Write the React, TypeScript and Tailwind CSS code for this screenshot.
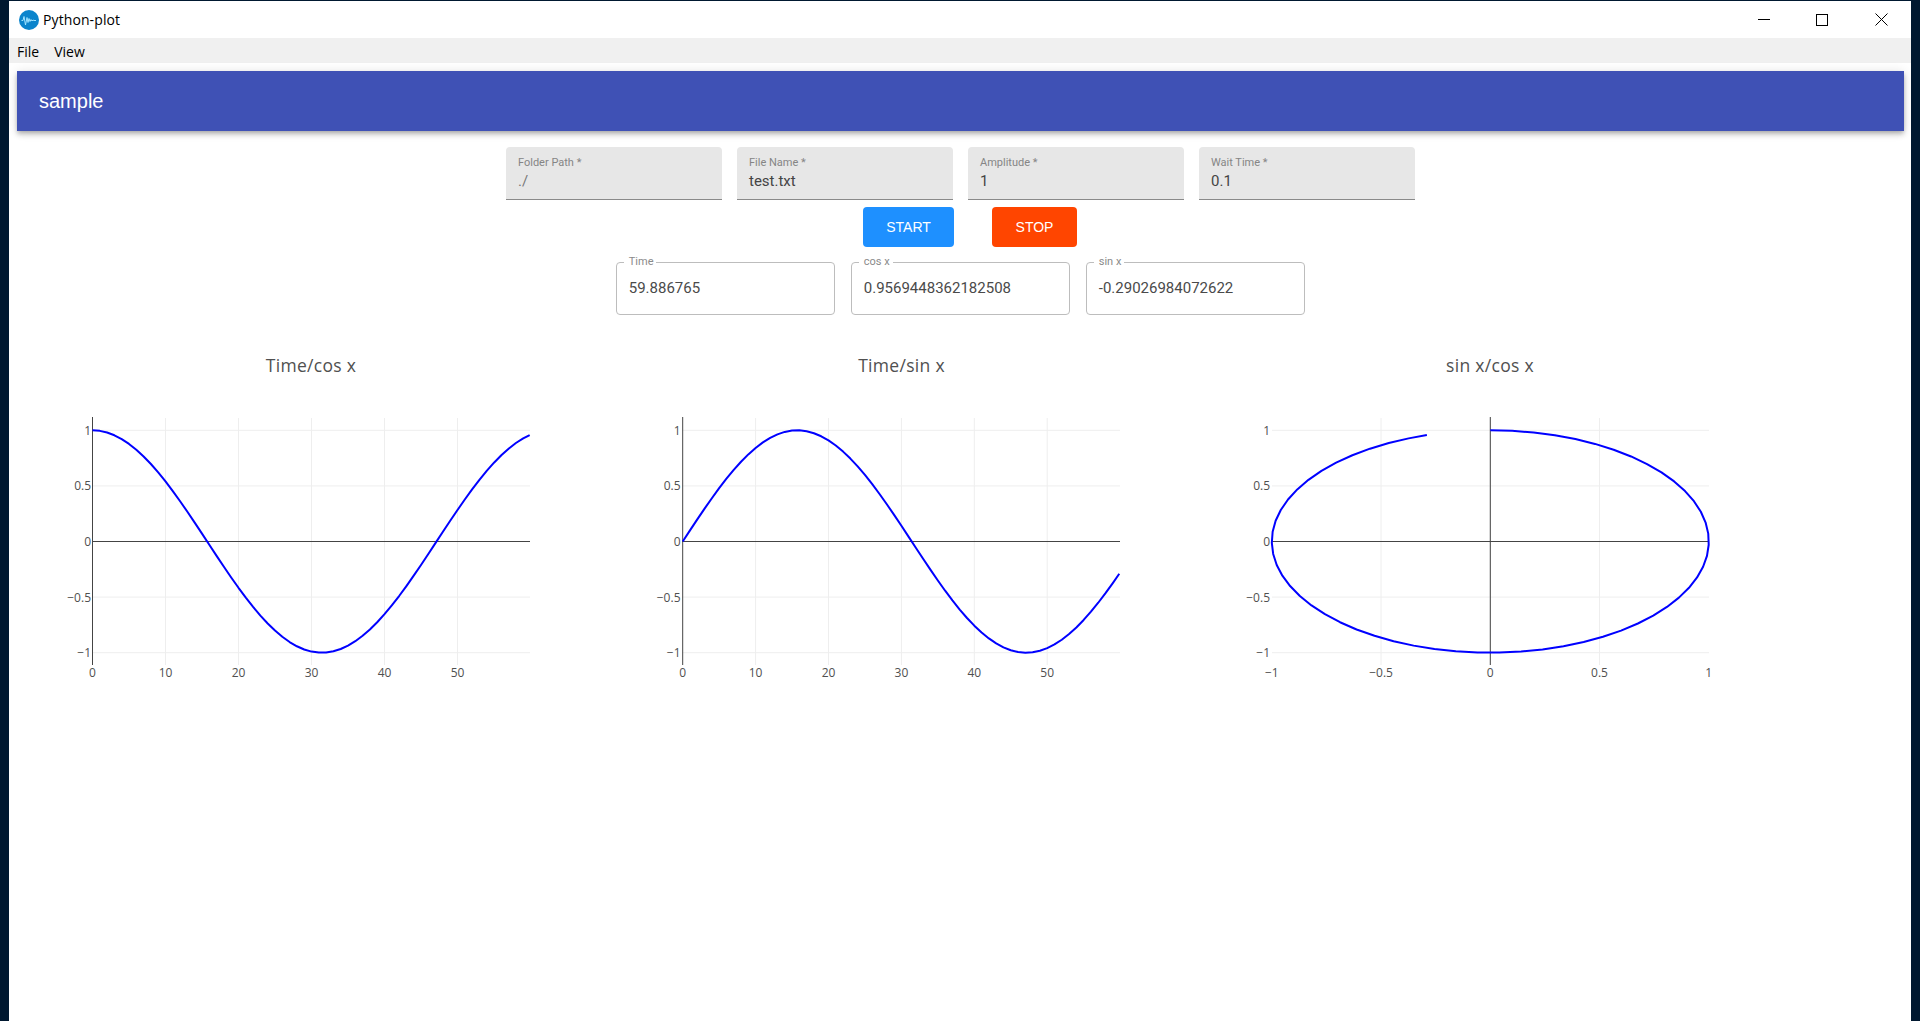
import React from 'react'

const PI_STEPS = Array.from({ length: 60 }, (_, i) => i).concat(59.886765)

const sans = "font-['Roboto',sans-serif]"

// one filled MUI style input
function FilledField({ label, value, dim }: { label: string; value: string; dim?: boolean }) {
  return (
    <div className="w-[216px] h-[53px] bg-[#e7e7e7] rounded-t border-b border-[#8a8a8a] px-3 pt-[9px]">
      <div className="text-[11px] leading-[13px] text-[#858585]">{label}</div>
      <div className={`text-[15px] leading-[20px] mt-[2px] ${dim ? 'text-[#777]' : 'text-[#444]'}`}>{value}</div>
    </div>
  )
}

function OutlinedField({ label, value }: { label: string; value: string }) {
  return (
    <fieldset className="w-[219.5px] h-[59px] border border-[#bdbdbd] rounded px-[7px]">
      <legend className="pl-[5px] pr-[3px] text-[11px] leading-[12px] text-[#8a8a8a]">{label}</legend>
      <div className="text-[15px] leading-[20px] text-[#4a4a4a] mt-[10px] ml-[5px]">{value}</div>
    </fieldset>
  )
}

type ChartProps = {
  title: string
  width: string
  box: string
  titleX: number
  x0: number
  xUnit: number
  right: number
  xTicks: { v: number; label: string }[]
  points: [number, number][]
  axisX: number
  labelX: number
  leftEdge: number
}

// y ticks are the same on all three plots
const yTicks = [
  { v: 1, label: '1' },
  { v: 0.5, label: '0.5' },
  { v: -0.5, label: '−0.5' },
  { v: -1, label: '−1' },
]
const yOf = (v: number) => 541.5 - v * 111.2

function Chart({ title, width, box, titleX, x0, xUnit, right, xTicks, points, axisX, labelX, leftEdge }: ChartProps) {
  const sx = (v: number) => x0 + v * xUnit
  const line = points.map(([a, b]) => `${sx(a).toFixed(2)},${yOf(b).toFixed(2)}`).join(' ')
  // no grid line on the very edges of the plot area
  const gridTicks = xTicks.filter((t) => sx(t.v) > leftEdge + 1 && sx(t.v) < right - 1)
  return (
    <svg className={`${width} h-[360px] shrink-0 block`} viewBox={box} style={{ fontFamily: "'Open Sans', sans-serif" }}>
      <text x={titleX} y={372} textAnchor="middle" fontSize="17.5" letterSpacing="0.3" fill="#505050">{title}</text>
      {gridTicks.map((t) => (
        <line key={t.label} x1={sx(t.v)} x2={sx(t.v)} y1={418} y2={665} stroke="#eee" strokeWidth="1" />
      ))}
      {yTicks.map((t) => (
        <line key={t.label} x1={leftEdge} x2={right} y1={yOf(t.v)} y2={yOf(t.v)} stroke="#eee" strokeWidth="1" />
      ))}
      <line x1={leftEdge} x2={right} y1={541.5} y2={541.5} stroke="#444" strokeWidth="1" />
      <line x1={axisX} x2={axisX} y1={417} y2={665} stroke="#444" strokeWidth="1" />
      <polyline points={line} fill="none" stroke="#0000ff" strokeWidth="2" strokeLinejoin="round" />
      {xTicks.map((t) => (
        <text key={t.label} x={sx(t.v)} y={677} textAnchor="middle" fontSize="12" fill="#505050">{t.label}</text>
      ))}
      {yTicks.concat({ v: 0, label: '0' }).map((t) => (
        <text key={t.label} x={labelX} y={yOf(t.v) + 4.5} textAnchor="end" fontSize="12" fill="#505050">{t.label}</text>
      ))}
    </svg>
  )
}

const timeTicks = [0, 10, 20, 30, 40, 50].map((v) => ({ v, label: String(v) }))
const ellipseTicks = [
  { v: -1, label: '−1' },
  { v: -0.5, label: '−0.5' },
  { v: 0, label: '0' },
  { v: 0.5, label: '0.5' },
  { v: 1, label: '1' },
]

export default function App() {
  const cosData = PI_STEPS.map((t): [number, number] => [t, Math.cos(t * 0.1)])
  const sinData = PI_STEPS.map((t): [number, number] => [t, Math.sin(t * 0.1)])
  const loopData = PI_STEPS.map((t): [number, number] => [Math.sin(t * 0.1), Math.cos(t * 0.1)])

  return (
    <div className={`h-[1021px] bg-[#001830] pt-px px-[9px] overflow-hidden ${sans}`}>
      <div className="h-full bg-white flex flex-col">
        {/* Title bar */}
        <div className="h-[37px] flex items-center justify-between font-['Open_Sans',sans-serif] text-[14px] text-black">
          <div className="flex items-center pl-[10px]">
            <svg width="20" height="20" viewBox="0 0 20 20">
              <circle cx="10" cy="10" r="10" fill="#0a84cc" />
              <path d="M2.500 10.500h1.500l1-4 1.500 8.500 1.500-7.500 1 5 1-4 1 3 1-2 1 1.500 1-1 1 .5h2" fill="none" stroke="#9fe3ff" strokeWidth="1" />
            </svg>
            <span className="ml-[4px] tracking-[0.1px]">Python-plot</span>
          </div>
          <div className="flex">
            <div className="w-[58px] h-[37px] flex items-center justify-center">
              <div className="w-3 h-px bg-black" />
            </div>
            <div className="w-[58px] h-[37px] flex items-center justify-center">
              <div className="w-3 h-3 border border-black" />
            </div>
            <div className="w-[60px] h-[37px] flex items-center justify-center">
              <svg width="13" height="13" viewBox="0 0 13 13">
                <path d="M0.500 0.500L12.500 12.500M12.500 0.500L0.500 12.500" stroke="#000" strokeWidth="1" />
              </svg>
            </div>
          </div>
        </div>

        {/* Menu bar */}
        <div className="h-[25px] bg-[#f0f0f0] flex items-center gap-[15px] pl-2 pt-px font-['Open_Sans',sans-serif] text-[14px] text-black">
          <span>File</span>
          <span>View</span>
        </div>

        {/* App bar */}
        <div className="ml-2 mr-[7px] mt-2 h-[60px] bg-[#3f51b5] flex items-center px-[22px] text-white text-[20px] font-['Liberation_Sans',sans-serif] shadow-[0_2px_4px_-1px_rgba(0,0,0,0.2),0_4px_5px_0_rgba(0,0,0,0.14),0_1px_10px_0_rgba(0,0,0,0.12)]">
          sample
        </div>

        {/* Settings */}
        <div className="flex justify-center gap-[15px] mt-4 pl-px">
          <FilledField label="Folder Path *" value="./" dim />
          <FilledField label="File Name *" value="test.txt" />
          <FilledField label="Amplitude *" value="1" />
          <FilledField label="Wait Time *" value="0.1" />
        </div>

        <div className="flex justify-center gap-[38px] mt-[7px] pl-[20px]">
          <button className="w-[91px] h-10 bg-[#1e90ff] text-white text-[14px] rounded font-['Liberation_Sans',sans-serif]">START</button>
          <button className="w-[85px] h-10 bg-[#ff4500] text-white text-[14px] rounded font-['Liberation_Sans',sans-serif]">STOP</button>
        </div>

        {/* Live values */}
        <div className="flex justify-center gap-[15.5px] mt-[9px] pl-px">
          <OutlinedField label="Time" value="59.886765" />
          <OutlinedField label="cos x" value="0.9569448362182508" />
          <OutlinedField label="sin x" value="-0.29026984072622" />
        </div>

        {/* Plots */}
        <div className="flex mt-[15px] ml-2">
          <Chart
            title="Time/cos x"
            width="w-[596px]"
            box="17 330 596 360"
            titleX={311}
            x0={92.5}
            xUnit={7.3}
            right={530}
            xTicks={timeTicks}
            points={cosData}
            axisX={92.5}
            labelX={91}
            leftEdge={92}
          />
          <Chart
            title="Time/sin x"
            width="w-[590px]"
            box="613 330 590 360"
            titleX={901.5}
            x0={682.7}
            xUnit={7.29}
            right={1120}
            xTicks={timeTicks}
            points={sinData}
            axisX={682.7}
            labelX={680.5}
            leftEdge={682}
          />
          <Chart
            title="sin x/cos x"
            width="w-[600px]"
            box="1203 330 600 360"
            titleX={1490}
            x0={1490.3}
            xUnit={218.5}
            right={1709}
            xTicks={ellipseTicks}
            points={loopData}
            axisX={1490.3}
            labelX={1270}
            leftEdge={1272}
          />
        </div>
      </div>
    </div>
  )
}
